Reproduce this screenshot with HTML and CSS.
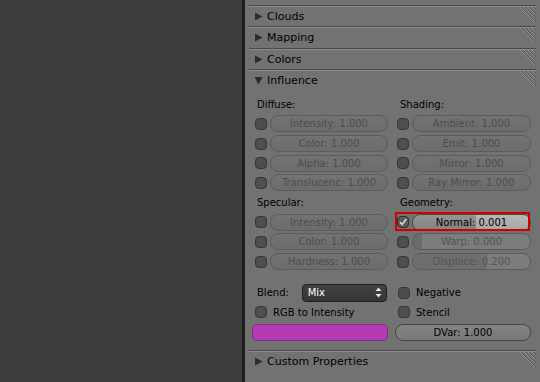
FILE: index.html
```html
<!DOCTYPE html>
<html lang="en">
  <head>
    <meta charset="UTF-8" />
    <title>Texture Influence</title>
    <link rel="stylesheet" href="styles.css">
  </head>
  <body>
    <div class="viewport"></div>
    <div class="properties">
      <section class="panel">
        <div class="panel-header">
          <svg class="tri" width="9" height="9" viewBox="0 0 9 9"><path d="M1 0.5 L8.5 4.5 L1 8.5Z" /></svg>
          <span class="title">Clouds</span>
          <svg class="grip" width="16" height="15" viewBox="0 0 16 15"><g stroke="#949494"><path d="M0 0L15 15M4 0L15 11M8 0L15 7M12 0L15 3" /></g><g stroke="#575757"><path d="M1 0L16 15M5 0L16 11M9 0L16 7M13 0L16 3" /></g></svg>
        </div>
      </section>
      <section class="panel">
        <div class="panel-header">
          <svg class="tri" width="9" height="9" viewBox="0 0 9 9"><path d="M1 0.5 L8.5 4.5 L1 8.5Z" /></svg>
          <span class="title">Mapping</span>
          <svg class="grip" width="16" height="15" viewBox="0 0 16 15"><g stroke="#949494"><path d="M0 0L15 15M4 0L15 11M8 0L15 7M12 0L15 3" /></g><g stroke="#575757"><path d="M1 0L16 15M5 0L16 11M9 0L16 7M13 0L16 3" /></g></svg>
        </div>
      </section>
      <section class="panel">
        <div class="panel-header">
          <svg class="tri" width="9" height="9" viewBox="0 0 9 9"><path d="M1 0.5 L8.5 4.5 L1 8.5Z" /></svg>
          <span class="title">Colors</span>
          <svg class="grip" width="16" height="15" viewBox="0 0 16 15"><g stroke="#949494"><path d="M0 0L15 15M4 0L15 11M8 0L15 7M12 0L15 3" /></g><g stroke="#575757"><path d="M1 0L16 15M5 0L16 11M9 0L16 7M13 0L16 3" /></g></svg>
        </div>
      </section>
      <section class="panel">
        <div class="panel-header">
          <svg class="tri" width="9" height="9" viewBox="0 0 9 9"><path d="M0.5 1 L8.5 1 L4.5 8.5Z" /></svg>
          <span class="title">Influence</span>
          <svg class="grip" width="16" height="15" viewBox="0 0 16 15"><g stroke="#949494"><path d="M0 0L15 15M4 0L15 11M8 0L15 7M12 0L15 3" /></g><g stroke="#575757"><path d="M1 0L16 15M5 0L16 11M9 0L16 7M13 0L16 3" /></g></svg>
        </div>
        <div class="panel-body">
          <div class="columns">
            <div class="col">
              <div class="label">Diffuse:</div>
              <div class="row"><span class="check"></span><span class="slider">Intensity: 1.000</span></div>
              <div class="row"><span class="check"></span><span class="slider">Color: 1.000</span></div>
              <div class="row"><span class="check"></span><span class="slider">Alpha: 1.000</span></div>
              <div class="row"><span class="check"></span><span class="slider">Translucenc: 1.000</span></div>
              <div class="label">Specular:</div>
              <div class="row"><span class="check"></span><span class="slider">Intensity: 1.000</span></div>
              <div class="row"><span class="check"></span><span class="slider">Color: 1.000</span></div>
              <div class="row"><span class="check"></span><span class="slider">Hardness: 1.000</span></div>
            </div>
            <div class="col right">
              <div class="label">Shading:</div>
              <div class="row"><span class="check"></span><span class="slider">Ambient: 1.000</span></div>
              <div class="row"><span class="check"></span><span class="slider">Emit: 1.000</span></div>
              <div class="row"><span class="check"></span><span class="slider">Mirror: 1.000</span></div>
              <div class="row"><span class="check"></span><span class="slider">Ray Mirror: 1.000</span></div>
              <div class="label">Geometry:</div>
              <div class="row selected">
                <span class="check on"><svg width="10" height="10" viewBox="0 0 10 10"><path d="M2 5.3 L4.2 7.5 L8.3 2" fill="none" stroke="#e8e8e8" stroke-width="1.3" /></svg></span>
                <span class="slider normal">Normal: 0.001</span>
              </div>
              <div class="row"><span class="check"></span><span class="slider warp">Warp: 0.000</span></div>
              <div class="row"><span class="check"></span><span class="slider displace">Displace: 0.200</span></div>
            </div>
          </div>
          <div class="columns blend-area">
            <div class="col">
              <div class="blend">
                <span class="blend-label">Blend:</span>
                <span class="menu">Mix
                  <svg width="7" height="11" viewBox="0 0 7 11"><path d="M3.5 0.5 L6.5 4 L0.5 4Z M0.5 7 L6.5 7 L3.5 10.5Z" fill="#e6e6e6" /></svg>
                </span>
              </div>
              <div class="toggle"><span class="check"></span>RGB to Intensity</div>
              <div class="swatch"></div>
            </div>
            <div class="col right">
              <div class="toggle"><span class="check"></span>Negative</div>
              <div class="toggle"><span class="check"></span>Stencil</div>
              <div class="num">DVar: 1.000</div>
            </div>
          </div>
        </div>
      </section>
      <section class="panel">
        <div class="panel-header">
          <svg class="tri" width="9" height="9" viewBox="0 0 9 9"><path d="M1 0.5 L8.5 4.5 L1 8.5Z" /></svg>
          <span class="title">Custom Properties</span>
          <svg class="grip" width="16" height="15" viewBox="0 0 16 15"><g stroke="#949494"><path d="M0 0L15 15M4 0L15 11M8 0L15 7M12 0L15 3" /></g><g stroke="#575757"><path d="M1 0L16 15M5 0L16 11M9 0L16 7M13 0L16 3" /></g></svg>
        </div>
      </section>
    </div>
  </body>
</html>
```

FILE: styles.css
```css
/* Layout */
* {
  box-sizing: border-box;
}
html,
body {
  margin: 0;
  height: 100%;
}
body {
  display: flex;
  background: #727272;
  font-family: "DejaVu Sans", sans-serif;
  font-size: 10px;
  color: #000;
  overflow: hidden;
}
.viewport {
  width: 245px;
  flex: none;
  background: #3d3d3d;
  border-right: 3px solid #1d1d1d;
}
.properties {
  flex: 1;
  padding: 5px 4px 0;
}

/* Panels */
.panel {
  border-top: 1px solid #484848;
}
.panel-header {
  height: 20.33px;
  border-top: 1px solid #8c8c8c;
  display: flex;
  align-items: center;
  padding-left: 5px;
  font-size: 11px;
}
.tri {
  fill: #2c2c2c;
  flex: none;
}
.title {
  flex: 1;
  margin-left: 4px;
}
.grip {
  align-self: flex-start;
  flex: none;
}
.panel-body {
  padding: 5.5px 5px 8.5px 3px;
}

/* Columns */
.columns {
  display: grid;
  grid-template-columns: 136px 136px;
  column-gap: 7px;
}
.col {
  display: flex;
  flex-direction: column;
  gap: 2.67px;
}
.label {
  height: 17px;
  line-height: 17px;
  padding-left: 5px;
}
.row {
  display: flex;
  align-items: center;
  gap: 3px;
  height: 17px;
  padding-left: 3px;
}
.col.right .row {
  padding-left: 2px;
}
.check {
  width: 12px;
  height: 12px;
  flex: none;
  border-radius: 4px;
  background: #4e4e4e;
  border: 1px solid #363636;
  display: flex;
  align-items: center;
  justify-content: center;
}
.check.on {
  background: #5c5c5c;
  border-color: #2e2e2e;
}

/* Sliders */
.slider {
  flex: 1;
  height: 17px;
  line-height: 15px;
  border: 1px solid #5c5c5c;
  border-radius: 8px;
  background: linear-gradient(#737373, #6c6c6c);
  color: #4d4d4d;
  text-align: center;
  white-space: nowrap;
}
.slider.normal {
  color: #000;
  border-color: #4a4a4a;
  background: linear-gradient(rgba(255, 255, 255, 0.08), rgba(0, 0, 0, 0.06)),
    linear-gradient(to right, #8b8b8b 0 54%, #b1b1b1 54%);
}
.slider.warp {
  color: #555;
  background: linear-gradient(to right, #6b6b6b 0 8%, #7c7c7c 8%);
}
.slider.displace {
  color: #555;
  background: linear-gradient(to right, #6e6e6e 0 63%, #7c7c7c 63%);
}
.row.selected {
  position: relative;
}
.row.selected::after {
  content: "";
  position: absolute;
  top: -2px;
  left: 0;
  right: 1px;
  bottom: 0;
  border: 2px solid #d00000;
}

/* Blend area */
.blend-area {
  margin-top: 14.2px;
}
.blend {
  display: flex;
  align-items: center;
  height: 17px;
  padding-left: 5px;
}
.blend-label {
  width: 44.7px;
}
.menu {
  width: 85px;
  height: 17.5px;
  display: flex;
  align-items: center;
  justify-content: space-between;
  padding: 0 4px 0 5px;
  background: linear-gradient(#414141, #363636);
  border: 1px solid #1f1f1f;
  border-radius: 4px;
  color: #fff;
}
.toggle {
  display: flex;
  align-items: center;
  gap: 6px;
  height: 17px;
  padding-left: 3px;
}
.swatch {
  height: 17px;
  border: 1px solid #7a357a;
  border-radius: 5px;
  background: #b43ab4;
}
.num {
  height: 17.5px;
  line-height: 15.5px;
  border: 1px solid #464646;
  border-radius: 8px;
  background: linear-gradient(#848484, #777);
  text-align: center;
}
```
